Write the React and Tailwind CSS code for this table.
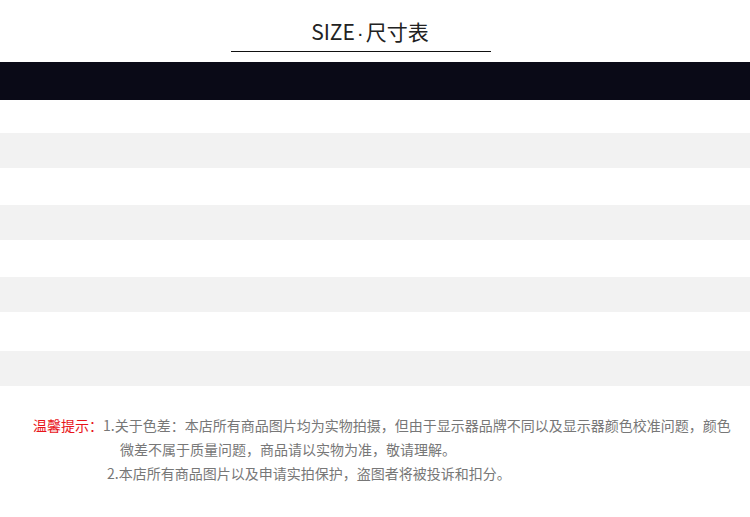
export default function App() {
    const rows = [
        { h: 'h-[33px]', bg: 'bg-white' },
        { h: 'h-[35px]', bg: 'bg-[#f2f2f2]' },
        { h: 'h-[37px]', bg: 'bg-white' },
        { h: 'h-[35px]', bg: 'bg-[#f2f2f2]' },
        { h: 'h-[37px]', bg: 'bg-white' },
        { h: 'h-[35px]', bg: 'bg-[#f2f2f2]' },
        { h: 'h-[39px]', bg: 'bg-white' },
        { h: 'h-[35px]', bg: 'bg-[#f2f2f2]' },
    ];

    return (
        <div className="w-[750px] h-[517px] bg-white overflow-hidden font-['Noto_Sans_CJK_SC','Noto_Sans',sans-serif]">
            {/* Title */}
            <div className="h-[62px] pt-[18px] pl-[231px]">
                <div className="w-[260px] flex flex-col">
                    <h1 className="pl-[18px] text-center text-[21px] leading-[26px] text-[#222]">
                        SIZE<span className="font-['Liberation_Sans',sans-serif] px-[2px]">·</span>尺寸表
                    </h1>
                    <div className="mt-[5px] h-px bg-[#111]" />
                </div>
            </div>

            {/* Table header bar */}
            <div className="h-[38px] bg-[#0a0a17]" />

            {/* Empty striped rows */}
            {rows.map((r, i) => (
                <div key={i} className={`${r.h} ${r.bg}`} />
            ))}

            {/* Notes */}
            <div className="pt-[27px] text-[14px] leading-[24px] text-[#777]">
                <p className="pl-[33px] whitespace-nowrap">
                    <span className="text-[#e8141a]">温馨提示：</span>1.关于色差：本店所有商品图片均为实物拍摄，但由于显示器品牌不同以及显示器颜色校准问题，颜色
                </p>
                <p className="pl-[120px]">微差不属于质量问题，商品请以实物为准，敬请理解。</p>
                <p className="pl-[107px]">2.本店所有商品图片以及申请实拍保护，盗图者将被投诉和扣分。</p>
            </div>
        </div>
    );
}
